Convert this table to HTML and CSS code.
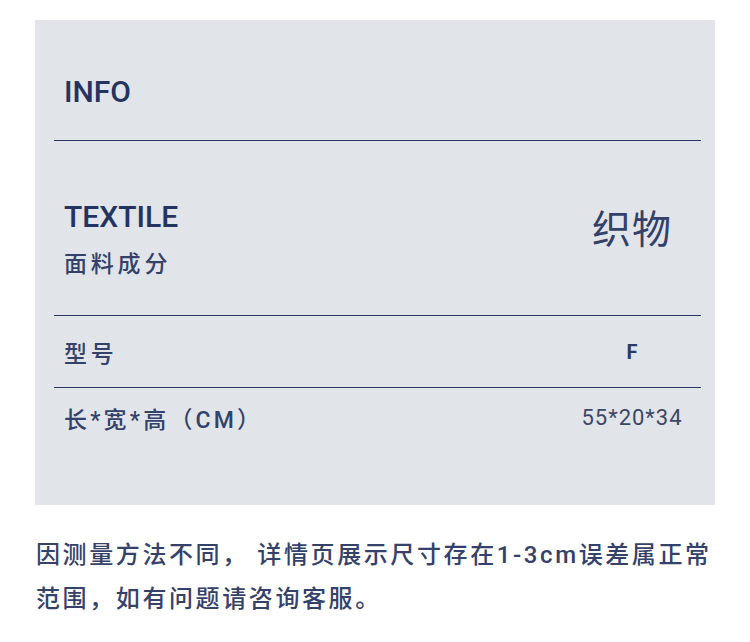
FILE: index.html
```html
<!DOCTYPE html>
<html lang="zh-CN">
<head>
<meta charset="utf-8">
<title>INFO</title>
<link rel="stylesheet" href="styles.css">
</head>
<body>
<section class="panel">
  <div class="head"><h2 class="title">INFO</h2></div>
  <div class="row row-textile">
    <div class="label-col">
      <div class="title">TEXTILE</div>
      <div class="label label-sub">面料成分</div>
    </div>
    <div class="value value-big">织物</div>
  </div>
  <div class="row row-model">
    <div class="label">型号</div>
    <div class="value value-bold">F</div>
  </div>
  <div class="row row-size">
    <div class="label label-size">长*宽*高（CM）</div>
    <div class="value value-num">55*20*34</div>
  </div>
</section>
<p class="note">因测量方法不同， 详情页展示尺寸存在1-3cm误差属正常范围，如有问题请咨询客服。</p>
</body>
</html>
```
FILE: styles.css
```css
html, body {
  margin: 0;
  padding: 0;
  background: #ffffff;
}
body {
  width: 750px;
  height: 642px;
  overflow: hidden;
  font-family: Roboto, "Noto Sans CJK SC", sans-serif;
  color: #26345d;
}
.panel {
  margin: 20px 35px 0;
  background: #e1e5ea;
  padding: 0 14px 69px 19px;
}
.head {
  padding: 54px 10px 30px;
  border-bottom: 1px solid #2a3660;
}
.title {
  margin: 0;
  font-family: Roboto, sans-serif;
  font-size: 30px;
  line-height: 36px;
  font-weight: 500;
  color: #253360;
}
.row {
  display: flex;
  justify-content: space-between;
  padding: 0 10px;
}
.row-textile {
  align-items: flex-start;
  padding-top: 58px;
  padding-bottom: 35px;
  border-bottom: 1px solid #2a3660;
}
.label-sub {
  margin-top: 15px;
}
.label {
  font-family: Roboto, "Noto Sans CJK SC", sans-serif;
  font-size: 23px;
  line-height: 30px;
  letter-spacing: 3.8px;
  font-weight: 500;
  color: #34416a;
}
.label-size {
  letter-spacing: 3.2px;
}
.value {
  width: 118px;
  text-align: center;
}
.value-big {
  margin-top: 3px;
  font-family: "Noto Sans CJK SC", sans-serif;
  font-size: 39px;
  line-height: 48px;
  font-weight: 400;
  letter-spacing: 1px;
  color: #33406a;
}
.row-model {
  align-items: center;
  padding-top: 24px;
  padding-bottom: 17px;
  border-bottom: 1px solid #2a3660;
}
.value-bold {
  font-size: 20px;
  line-height: 24px;
  font-weight: 700;
  margin-top: -6px;
  color: #2c3960;
}
.row-size {
  align-items: center;
  padding-top: 18px;
}
.value-num {
  font-size: 22px;
  line-height: 24px;
  letter-spacing: 1px;
  margin-top: -6px;
  color: #3a4767;
}
.note {
  margin: 28px 0 0;
  padding: 0 36px;
  font-family: Roboto, "Noto Sans CJK SC", sans-serif;
  font-size: 24px;
  line-height: 44px;
  letter-spacing: 2.6px;
  font-weight: 500;
  color: #34416a;
}
```
